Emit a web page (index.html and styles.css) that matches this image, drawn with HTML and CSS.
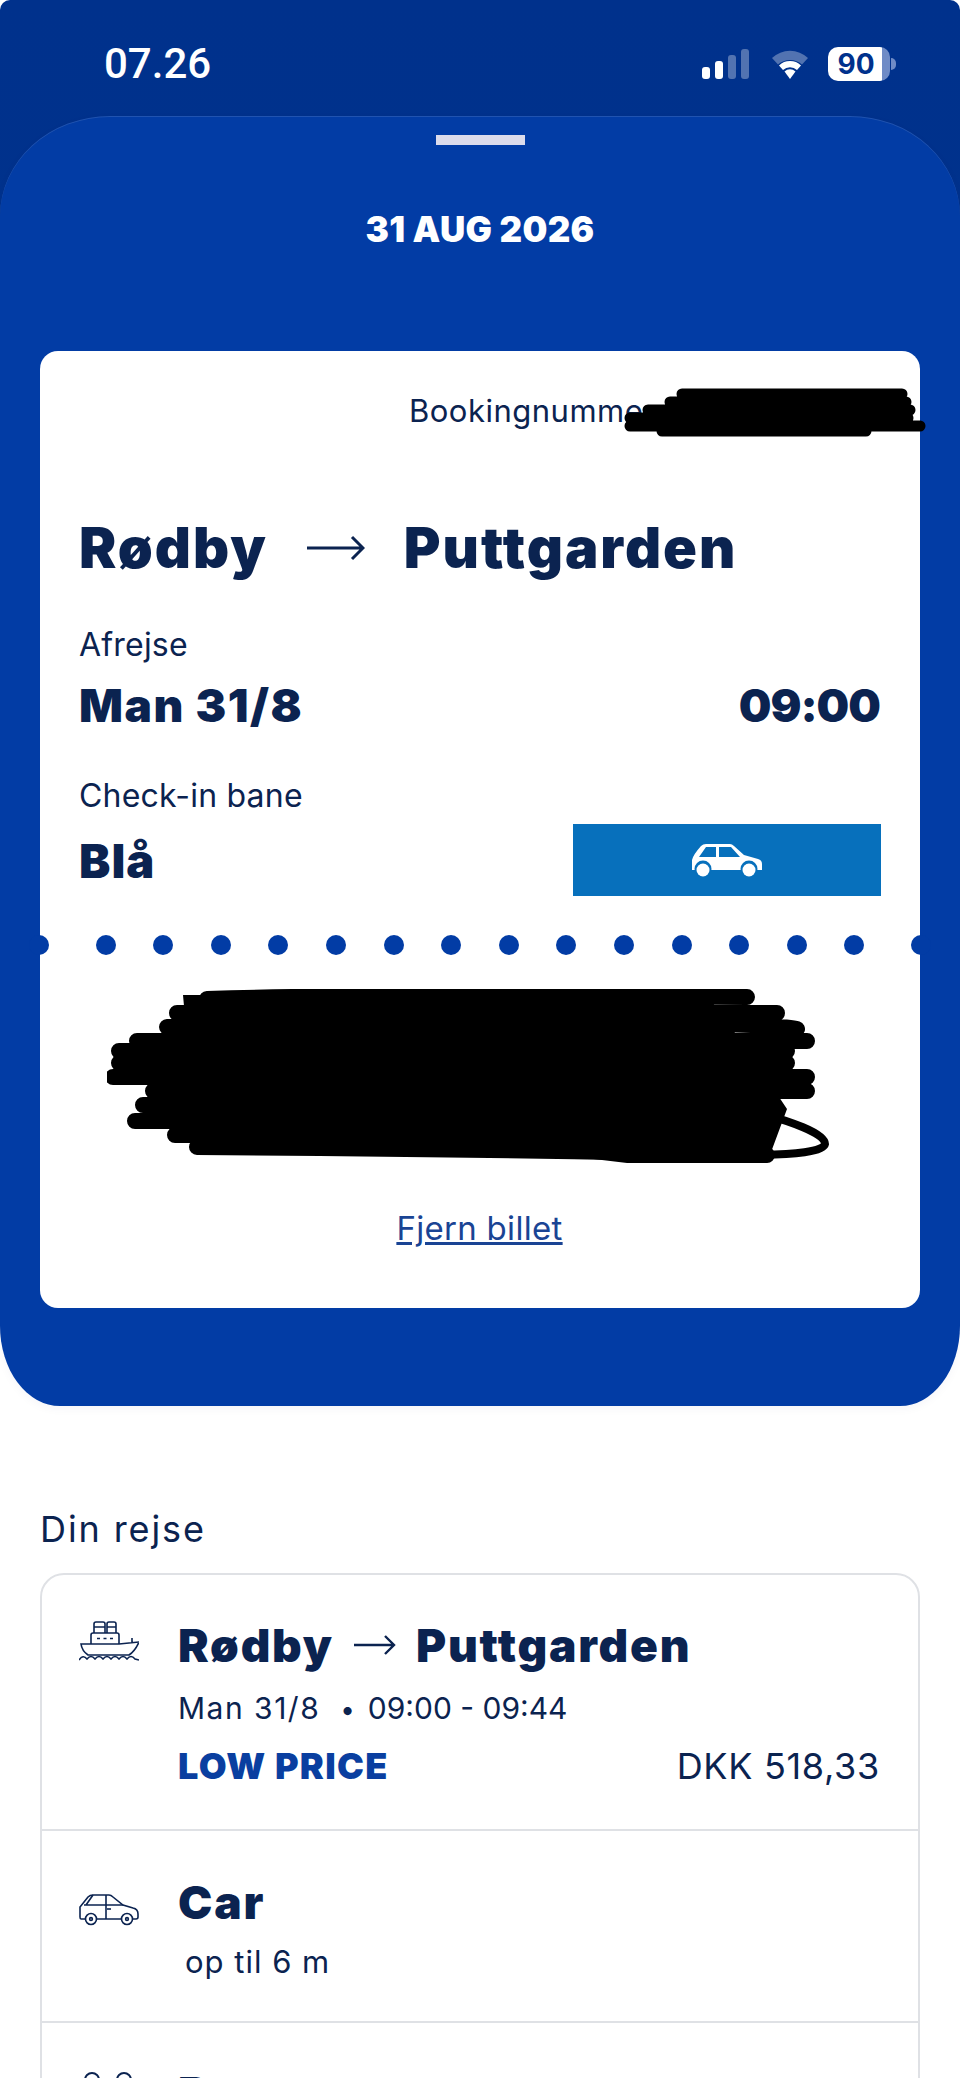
FILE: index.html
```html
<!DOCTYPE html>
<html lang="da">
<head>
    <meta charset="UTF-8">
    <meta name="viewport" content="width=device-width, initial-scale=1.0">
    <title>Din rejse</title>
    <link rel="stylesheet" href="styles.css">
</head>
<body>
    <div class="top">
        <div class="status-bar">
            <span class="clock">07.26</span>
            <div class="status-icons">
                <div class="signal">
                    <i class="bar bar1"></i><i class="bar bar2"></i><i class="bar bar3 dim"></i><i class="bar bar4 dim"></i>
                </div>
                <svg class="wifi" width="42" height="32" viewBox="0 0 42 32">
                    <path d="M3 10 A26 26 0 0 1 39 10 L33 16.5 A18 18 0 0 0 9 16.5 Z" fill="#fff" opacity="0.32"/>
                    <path d="M10 17.5 A16 16 0 0 1 32 17.5 L28 22 A10.5 10.5 0 0 0 14 22 Z" fill="#fff"/>
                    <path d="M15.5 23.5 A8 8 0 0 1 26.5 23.5 L21 31 Z" fill="#fff"/>
                </svg>
                <div class="battery"><span class="battery-level">90</span></div>
            </div>
        </div>

        <section class="sheet">
            <div class="handle"></div>
            <h1 class="sheet-date">31 AUG 2026</h1>

            <div class="ticket">
                <div class="booking">Bookingnummer</div>
                <svg class="scribble-booking" width="310" height="54" viewBox="0 0 310 54">
                    <path d="M64 8 H284 M52 16 H288 M30 24 H292 M12 32 H290 M12 40 H302 M44 45 H248" stroke="#000" stroke-width="11" stroke-linecap="round" fill="none"/>
                </svg>

                <div class="route">
                    <span>Rødby</span>
                    <svg class="route-arrow" width="58" height="26" viewBox="0 0 58 26">
                        <path d="M0 13 H56 M45 2 L56 13 L45 24" stroke="#0b2350" stroke-width="3" fill="none"/>
                    </svg>
                    <span>Puttgarden</span>
                </div>

                <div class="label label-depart">Afrejse</div>
                <div class="value-row">
                    <span class="day">Man 31/8</span>
                    <span class="time">09:00</span>
                </div>

                <div class="label label-lane">Check-in bane</div>
                <div class="lane-row">
                    <span>Blå</span>
                    <div class="lane-box">
                        <svg width="70" height="34" viewBox="0 0 70 34">
                            <path d="M0 17 Q1 12 9 3 Q11 1 14 1 H38 Q40 1 42 3 L52 12 L66 16 Q70 17 70 21 V27 H0 Z" fill="#fff"/>
                            <path d="M7 14 L14 4 H24 V14 Z M27 4 H39 L48 14 H27 Z" fill="#0770bc"/>
                            <circle cx="11" cy="26" r="8.5" fill="#0770bc"/>
                            <circle cx="57" cy="26" r="8.5" fill="#0770bc"/>
                            <circle cx="11" cy="27" r="6.5" fill="#fff"/>
                            <circle cx="57" cy="27" r="6.5" fill="#fff"/>
                        </svg>
                    </div>
                </div>

                <div class="dots">
                    <i></i><i></i><i></i><i></i><i></i><i></i><i></i><i></i><i></i><i></i><i></i><i></i><i></i><i></i><i></i><i></i>
                </div>

                <div class="code-area">
                    <svg class="scribble-code" width="724" height="180" viewBox="0 0 724 180">
                        <path d="M100 10 Q300 4 640 8 M70 24 H670 M60 38 Q660 30 690 40 M30 52 H700 M12 62 H680 M12 74 H680 M6 88 H700 M46 102 H700 M36 116 H660 M28 132 H660 M68 146 H660 M90 158 Q400 160 660 166" stroke="#000" stroke-width="16" stroke-linecap="round" fill="none"/>
                        <path d="M76 6 H600 L640 60 L680 120 L660 174 H520 L420 162 H90 Z" fill="#000"/>
                        <path d="M630 118 Q718 140 718 155 Q716 166 640 166" stroke="#000" stroke-width="8" fill="none"/>
                    </svg>
                </div>

                <a class="remove-link" href="#">Fjern billet</a>
            </div>
        </section>
    </div>

    <main class="journey">
        <h2 class="journey-title">Din rejse</h2>
        <div class="journey-card">
            <div class="row row-trip">
                <svg class="row-icon" width="60" height="40" viewBox="0 0 60 40">
                    <g fill="none" stroke="#0b2350" stroke-width="1.6">
                        <path d="M15 12 V3 Q15 1 17 1 H24 Q26 1 26 3 V12 M28 12 V3 Q28 1 30 1 H35 Q37 1 37 3 V12 M15 6 H26 M28 6 H37"/>
                        <path d="M12 23 V14 Q12 12 14 12 H38 Q40 12 40 14 V23"/>
                        <path d="M18 17.5 H21 M24.500 17.500 H27.500 M31 17.500 H34"/>
                        <path d="M53 22 V17 M2 23 H40 L60 21 Q56 30 50 34 H9 Q3 30 2 23 Z"/>
                        <path d="M0 39 Q4 33 8 38 Q12 33 16 38 Q20 33 24 38 Q28 33 32 38 Q36 33 40 38 Q44 33 48 38 Q52 33 56 38 L60 39"/>
                    </g>
                </svg>
                <div class="row-body">
                    <div class="row-title">
                        <span>Rødby</span>
                        <svg class="row-arrow" width="42" height="22" viewBox="0 0 42 22">
                            <path d="M0 11 H40 M31 2 L40 11 L31 20" stroke="#0b2350" stroke-width="2.4" fill="none"/>
                        </svg>
                        <span>Puttgarden</span>
                    </div>
                    <div class="row-times"><span class="row-day">Man 31/8</span><span class="sep">•</span>09:00 - 09:44</div>
                    <div class="row-price">
                        <span class="fare">LOW PRICE</span>
                        <span class="price">DKK 518,33</span>
                    </div>
                </div>
            </div>

            <div class="row row-car">
                <svg class="row-icon" width="60" height="32" viewBox="0 0 60 32">
                    <g fill="none" stroke="#0b2350" stroke-width="1.6">
                        <path d="M6 25 H2 Q1 25 1 23 V13 L9 3 Q11 1 14 1 H30 Q32 1 34 3 L44 11 L54 14 Q59 15 59 20 V23 Q59 25 57 25 H54 M18 25 H42"/>
                        <path d="M5 11 H44 M27 1 V25 M14 1 L7 11"/>
                        <path d="M28 15 H32"/>
                        <circle cx="12" cy="25" r="5.500"/>
                        <circle cx="48" cy="25" r="5.500"/>
                        <circle cx="12" cy="25" r="1.400"/>
                        <circle cx="48" cy="25" r="1.400"/>
                    </g>
                </svg>
                <div class="row-body">
                    <div class="row-title">Car</div>
                    <div class="row-sub">op til 6 m</div>
                </div>
            </div>

            <div class="row row-people">
                <svg class="row-icon" width="60" height="32" viewBox="0 0 60 32">
                    <g fill="none" stroke="#0b2350" stroke-width="2">
                        <circle cx="13" cy="10" r="7"/>
                        <circle cx="45" cy="10" r="7"/>
                    </g>
                </svg>
                <div class="row-body">
                    <div class="row-title">Passagerer</div>
                </div>
            </div>
        </div>
    </main>
</body>
</html>
```

FILE: styles.css
```css
* {
    box-sizing: border-box;
}

html, body {
    margin: 0;
    padding: 0;
    height: 2078px;
    overflow: hidden;
}

body {
    font-family: "Inter", "Noto Sans", sans-serif;
    background-color: #fff;
    color: #0b2350;
}

/* Top area */
.top {
    background: linear-gradient(#00318c 0, #00328c 300px, transparent 300px);
    border-radius: 10px 10px 0 0;
}

.status-bar {
    height: 116px;
    padding: 0 70px 0 104px;
    display: flex;
    justify-content: space-between;
    align-items: flex-start;
}

.clock {
    margin-top: 39px;
    font-family: "Roboto", sans-serif;
    font-weight: 500;
    font-size: 42px;
    line-height: 50px;
    color: #fff;
}

.status-icons {
    margin-top: 47px;
    display: flex;
    align-items: center;
    gap: 20px;
}

.signal {
    display: flex;
    align-items: flex-end;
    gap: 5px;
    height: 30px;
}

.wifi {
    margin-right: -3px;
}

.bar {
    display: block;
    width: 8px;
    background-color: #fff;
    border-radius: 3px;
}

.bar1 { height: 12px; }
.bar2 { height: 18px; }
.bar3 { height: 24px; }
.bar4 { height: 30px; }

.dim {
    opacity: 0.32;
}

.battery {
    width: 62px;
    height: 34px;
    border-radius: 10px;
    background: linear-gradient(90deg, #fff 0, #fff 87%, #6f8bc6 87%);
    text-align: center;
    position: relative;
}

.battery::after {
    content: "";
    position: absolute;
    left: 63px;
    top: 11px;
    width: 5px;
    height: 12px;
    background-color: #6f8bc6;
    border-radius: 0 6px 6px 0;
}

.battery-level {
    font-weight: 700;
    font-size: 28px;
    line-height: 34px;
    color: #00318c;
    margin-right: 6px;
}

/* Blue sheet */
.sheet {
    height: 1290px;
    padding: 19px 40px 0;
    background-color: #023ca5;
    border-radius: 110px 110px 60px 60px / 100px 100px 80px 80px;
    box-shadow: inset 0 1px 0 rgba(255, 255, 255, 0.12), 0 3px 10px rgba(0, 30, 90, 0.04);
}

.handle {
    width: 89px;
    height: 10px;
    margin: 0 auto;
    background-color: #dcdcec;
}

.sheet-date {
    margin: 62px 0 0;
    height: 44px;
    font-size: 35px;
    line-height: 44px;
    font-weight: 900;
    letter-spacing: 0.3px;
    text-align: center;
    color: #fff;
}

.ticket {
    position: relative;
    height: 957px;
    margin-top: 100px;
    padding: 40px 40px 0 39px;
    background-color: #fff;
    border-radius: 18px;
}

.booking {
    padding-left: 330px;
    font-size: 31px;
    line-height: 40px;
    letter-spacing: 0.5px;
    white-space: nowrap;
}

.scribble-booking {
    position: absolute;
    left: 578px;
    top: 35px;
}

.route {
    display: flex;
    align-items: center;
    gap: 39px;
    margin-top: 84px;
    font-size: 56px;
    line-height: 66px;
    font-weight: 900;
    letter-spacing: 2px;
}

.label {
    font-size: 32px;
    line-height: 40px;
    letter-spacing: 0.2px;
}

.label-depart {
    margin-top: 44px;
}

.label-lane {
    margin-top: 43px;
}

.value-row {
    display: flex;
    justify-content: space-between;
    margin-top: 12px;
    font-size: 46px;
    line-height: 56px;
    font-weight: 900;
}

.day {
    letter-spacing: 1.5px;
}

.time {
    letter-spacing: -1px;
}

.lane-row {
    display: flex;
    justify-content: space-between;
    align-items: center;
    margin-top: 8px;
    margin-right: -1px;
    font-size: 47px;
    font-weight: 900;
    letter-spacing: 1px;
}

.lane-box {
    width: 308px;
    height: 72px;
    display: flex;
    align-items: center;
    justify-content: center;
    background-color: #0770bc;
}

.dots {
    display: flex;
    justify-content: space-between;
    margin: 39px -51px 0 -50px;
}

.dots i {
    display: block;
    width: 20px;
    height: 20px;
    border-radius: 50%;
    background-color: #023ca5;
}

.dots i:first-child {
    margin-right: 9px;
}

.dots i:last-child {
    margin-left: 9px;
}

.code-area {
    height: 180px;
    margin: 34px -40px 0 -39px;
    padding-left: 67px;
}

.remove-link {
    display: block;
    margin-top: 39px;
    font-size: 33px;
    line-height: 40px;
    letter-spacing: 0.3px;
    text-align: center;
    color: #1a4494;
}

/* Din rejse */
.journey {
    padding: 0 40px;
}

.journey-title {
    margin: 101px 0 0;
    font-size: 36px;
    line-height: 44px;
    font-weight: 400;
    letter-spacing: 1.900px;
}

.journey-card {
    margin-top: 22px;
    border: 2px solid #dfe1e5;
    border-radius: 24px;
}

.row {
    display: flex;
    align-items: flex-start;
    padding: 0 38px 0 37px;
    gap: 39px;
    border-bottom: 2px solid #dfe1e5;
}

.row-trip {
    height: 256px;
    padding-top: 46px;
}

.row-trip .row-body {
    margin-top: -4px;
}

.row-car {
    height: 192px;
    padding-top: 43px;
}

.row-car .row-icon {
    margin-top: 20px;
}

.row-people {
    padding-top: 42px;
}

.row-people .row-icon {
    margin-top: 5px;
}

.row-icon {
    flex-shrink: 0;
}

.row-body {
    flex: 1;
}

.row-title {
    display: flex;
    align-items: center;
    gap: 20px;
    font-size: 46px;
    line-height: 56px;
    font-weight: 900;
    letter-spacing: 1.800px;
}

.row-times {
    margin-top: 15px;
    font-size: 30px;
    line-height: 40px;
}

.row-day {
    letter-spacing: 1.500px;
}

.sep {
    margin: 0 13px 0 20px;
    font-size: 26px;
}

.row-price {
    display: flex;
    justify-content: space-between;
    margin-top: 14px;
    font-size: 36px;
    line-height: 44px;
}

.fare {
    font-weight: 900;
    letter-spacing: 1.300px;
    color: #0a3fa0;
}

.price {
    letter-spacing: 0.700px;
}

.row-sub {
    margin-top: 12px;
    padding-left: 7px;
    font-size: 31px;
    line-height: 40px;
    letter-spacing: 1px;
}
```
